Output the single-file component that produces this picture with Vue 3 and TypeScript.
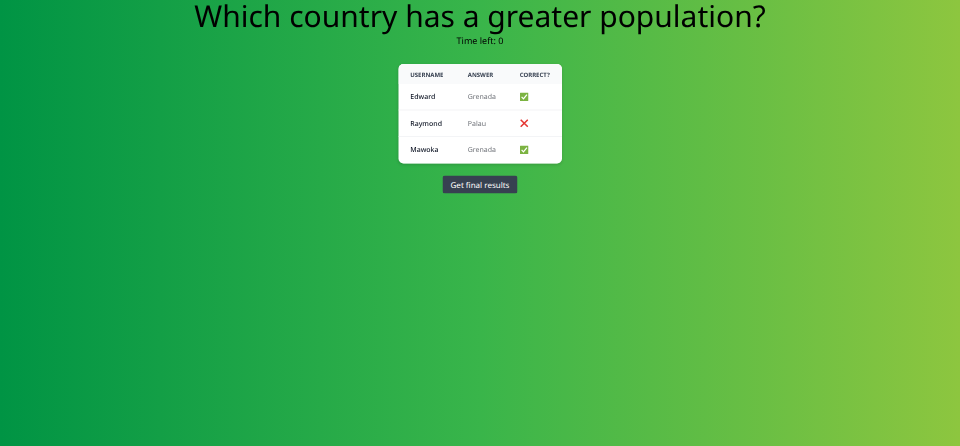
<script setup lang="ts">
interface Row { username: string; answer: string; correct: boolean }
const rows: Row[] = [
  { username: 'Edward', answer: 'Grenada', correct: true },
  { username: 'Raymond', answer: 'Palau', correct: false },
  { username: 'Mawoka', answer: 'Grenada', correct: true },
]
</script>

<template>
  <div class="viewport">
    <main class="page">
      <h1 class="question">Which country has a greater population?</h1>
      <p class="timer">Time left: 0</p>
      <div class="card">
        <table class="results">
          <colgroup><col class="c1"><col class="c2"><col></colgroup>
          <thead>
            <tr><th>Username</th><th>Answer</th><th>Correct?</th></tr>
          </thead>
          <tbody>
            <tr v-for="row in rows" :key="row.username">
              <td class="name">{{ row.username }}</td>
              <td>{{ row.answer }}</td>
              <td>
                <svg v-if="row.correct" class="mark" viewBox="0 0 16 16">
                  <rect width="16" height="16" rx="1" fill="#7cb342" />
                  <path d="M3 8.3 6.5 12 13 3.8" fill="none" stroke="#fff" stroke-width="2.3" />
                </svg>
                <svg v-else class="mark" viewBox="0 0 16 16">
                  <path d="M1.3 1.3 14.7 14.7M14.7 1.3 1.3 14.7" fill="none" stroke="#e53935" stroke-width="3" />
                </svg>
              </td>
            </tr>
          </tbody>
        </table>
      </div>
      <button class="final" type="button">Get final results</button>
    </main>
  </div>
</template>

<style>
body { margin: 0; }
</style>

<style scoped>
.viewport {
  height: 446px;
  overflow: hidden;
  background: linear-gradient(to right, #009444, #39b54a, #8dc63f);
}
.page {
  width: 200%;
  height: 892px;
  transform: scale(0.5);
  transform-origin: 0 0;
  display: flex;
  flex-direction: column;
  align-items: center;
  font-family: "Noto Sans", sans-serif;
  color: #000;
  text-rendering: geometricPrecision;
}
.question { margin: 0; font-size: 60px; line-height: 62px; font-weight: 400; white-space: nowrap; }
.timer { margin: 7px 0 0; font-size: 18px; line-height: 26px; }
.card {
  width: 327px;
  margin-top: 33px;
  border-radius: 10px;
  overflow: hidden;
  background: #fff;
  box-shadow: 0 2px 6px rgba(0, 0, 0, 0.14);
}
.results { width: 100%; border-spacing: 0; table-layout: fixed; text-align: left; }
.c1 { width: 115px; }
.c2 { width: 104px; }
th { box-sizing: border-box; height: 40px; padding: 2px 0 0 24px; background: #f9fafb; color: #374151; font-size: 12px; line-height: 16px; font-weight: 700; text-transform: uppercase; }
td { box-sizing: border-box; height: 53px; padding: 0 0 0 24px; border-bottom: 2px solid #f3f4f6; font-size: 14px; line-height: 20px; color: #71747a; }
.name { color: #111827; font-weight: 500; }
tbody tr:last-child td { border-bottom-color: #fff; }
.mark { display: block; width: 17px; height: 17px; }
.final { margin: 24px 0 0; width: 150px; height: 36px; padding: 0; border: 0; border-radius: 5px; background: #374151; color: #fff; font: 16px "Noto Sans", sans-serif; text-rendering: geometricPrecision; }
</style>
